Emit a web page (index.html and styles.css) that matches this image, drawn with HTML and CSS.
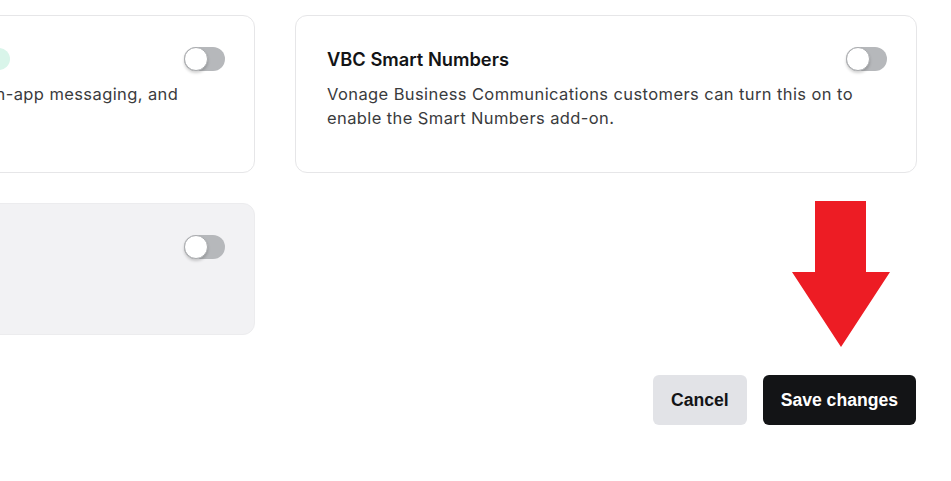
FILE: index.html
```html
<!DOCTYPE html>
<html>
<head>
<meta charset="utf-8">
<link rel="stylesheet" href="styles.css">
</head>
<body>
<div class="page">
  <div class="grid">
    <div class="card">
      <div class="card-head">
        <div class="title-wrap">
          <span class="title">In-app Voice and Messaging API</span>
          <span class="badge">New</span>
        </div>
        <span class="toggle"><span class="knob"></span></span>
      </div>
      <p class="desc">Turn this on to enable Voice API, video, in-app messaging, and conversations for your application.</p>
    </div>
    <div class="card">
      <div class="card-head">
        <div class="title-wrap">
          <span class="title">VBC Smart Numbers</span>
        </div>
        <span class="toggle"><span class="knob"></span></span>
      </div>
      <p class="desc">Vonage Business Communications customers can turn this on to enable the Smart Numbers add-on.</p>
    </div>
    <div class="card card-muted">
      <div class="card-head">
        <div class="title-wrap">
          <span class="title">Network Registry</span>
        </div>
        <span class="toggle"><span class="knob"></span></span>
      </div>
      <p class="desc">Available for approved accounts.</p>
    </div>
  </div>
  <div class="actions">
    <button class="btn btn-secondary">Cancel</button>
    <button class="btn btn-primary">Save changes</button>
    <svg class="arrow" width="100" height="148" viewBox="0 0 100 148">
      <polygon points="23,0 74,0 74,71 98,71 49,146 0,71 23,71" fill="#ed1c24"/>
    </svg>
  </div>
</div>
</body>
</html>
```

FILE: styles.css
```css
html, body {
  margin: 0;
  padding: 0;
  background: #ffffff;
}
body {
  font-family: "Inter", "Noto Sans", sans-serif;
  color: #131416;
  overflow: hidden;
}
.page {
  width: 951px;
  height: 481px;
  position: relative;
  overflow: hidden;
}
.grid {
  display: grid;
  grid-template-columns: 622px 622px;
  column-gap: 40px;
  row-gap: 30px;
  margin-left: -367px;
  padding-top: 15px;
  align-items: start;
}
.card {
  border: 1px solid #e6e6e8;
  border-radius: 12px;
  padding: 31px 29px 42px 31px;
  background: #ffffff;
}
.card-muted {
  background: #f2f2f4;
  border-color: #ececee;
  padding-bottom: 40px;
}
.card-head {
  display: flex;
  align-items: center;
  justify-content: space-between;
  height: 24px;
}
.title-wrap {
  display: flex;
  align-items: center;
  gap: 10px;
}
.title {
  font-size: 18.3px;
  font-weight: 600;
  color: #131416;
}
.badge {
  display: inline-block;
  height: 22px;
  line-height: 22px;
  padding: 0 10px;
  border-radius: 11px;
  background: #d9f5ea;
  color: #0b6b4b;
  font-size: 13px;
  font-weight: 600;
}
.toggle {
  position: relative;
  width: 41px;
  height: 24px;
  border-radius: 12px;
  background: #b6b8bb;
  flex: none;
}
.knob {
  position: absolute;
  left: 0;
  top: 0;
  width: 22px;
  height: 22px;
  border-radius: 50%;
  background: #ffffff;
  border: 1px solid #a9abae;
  box-shadow: 0 2px 3px rgba(0,0,0,0.18);
}
.desc {
  margin: 11px 0 0 0;
  font-family: "Inter", "Roboto", sans-serif;
  font-size: 16.5px;
  font-weight: 400;
  line-height: 24px;
  letter-spacing: 0.4px;
  color: #3a3b3d;
}
.card-muted .desc {
  color: #6b6c70;
}
.actions {
  position: relative;
  display: flex;
  justify-content: flex-end;
  gap: 16px;
  padding-right: 35px;
  margin-top: 40px;
}
.btn {
  height: 50px;
  border: none;
  border-radius: 6px;
  font-family: "Liberation Sans", Arial, sans-serif;
  font-size: 17.6px;
  font-weight: 700;
  padding: 0 18px;
  cursor: pointer;
}
.btn-secondary {
  background: #e2e3e7;
  color: #131416;
}
.btn-primary {
  background: #131416;
  color: #ffffff;
}
.arrow {
  position: absolute;
  left: 792px;
  top: -174px;
}
```
